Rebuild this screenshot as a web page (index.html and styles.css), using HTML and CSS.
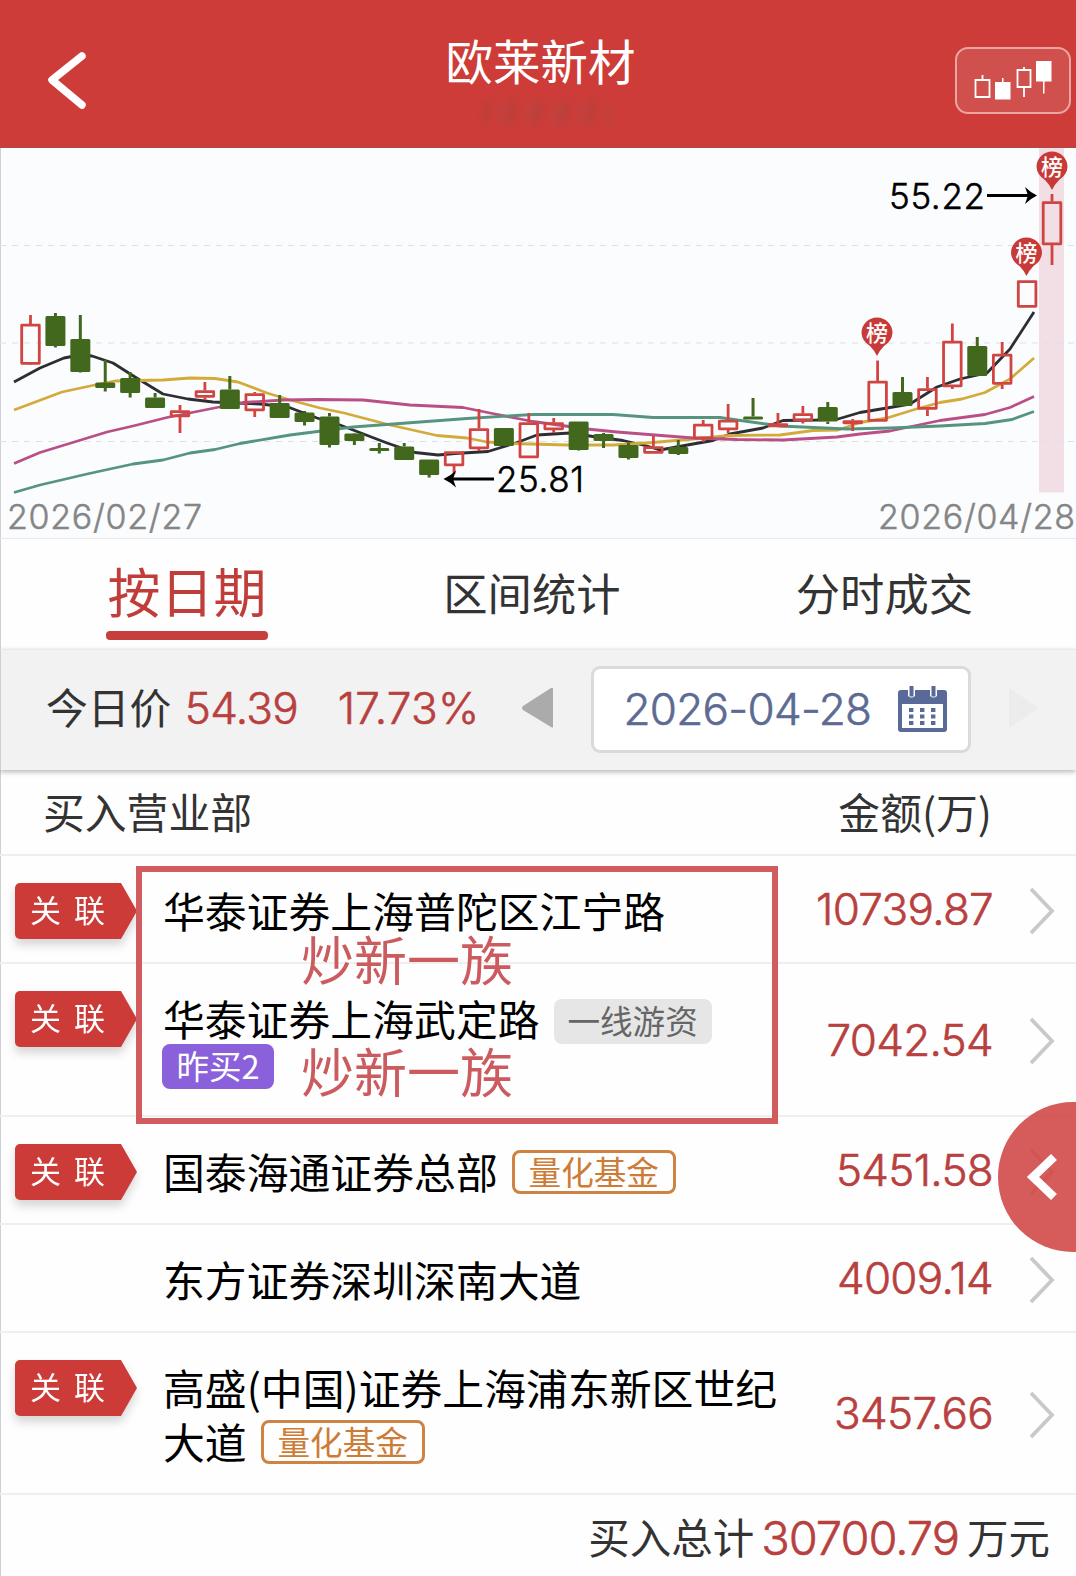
FILE: index.html
```
<!DOCTYPE html>
<html lang="zh-CN">
<head>
    <meta charset="UTF-8">
    <title>欧莱新材</title>
    <link rel="stylesheet" href="styles.css">
    <script type="text/javascript" src="chart.js"></script>
</head>
<body>
    <div id="outer">
        <!--顶部标题栏-->
        <div id="header">
            <svg class="back" width="44" height="64" viewBox="0 0 44 64">
                <path d="M36 7 L6 31 L36 56"/>
            </svg>
            <div class="title">
                <h1>欧莱新材</h1>
                <div class="smudge"></div>
            </div>
            <div class="kBtn">
                <svg width="112" height="63" viewBox="957 49 112 63">
                    <path class="hollow" d="M975.5 80h14v17h-14zM982.5 75v5M1017.5 70h13v17h-13zM1024 67v3M1024 87v10"/>
                    <path class="full" d="M995 82h15.500v17.500h-15.500zM1002 78h1.500v4h-1.500zM1036 61h15.500v20.500h-15.500zM1043 81h1.500v12.500h-1.500z"/>
                </svg>
            </div>
        </div>

        <!--K线图-->
        <div id="chart">
            <svg id="kline" width="1076" height="390" viewBox="0 148 1076 390">
                <rect class="band" x="1039" y="148" width="25" height="344.500"/>
                <path class="grid" d="M0 245.500H1076M0 343H1076M0 441.500H1076"/>
                <g id="lines"></g>
                <g id="candles"></g>
                <g id="marks"></g>
                <path class="arrow" d="M987 195.500H1034"/>
                <path d="M1037 195.500Q1030 192 1025 187L1028 195.500L1025 204Q1030 199 1037 195.500Z"/>
                <path class="arrow" d="M494 479H447"/>
                <path d="M443.500 479Q451 475.500 456 470.500L453 479L456 487.500Q451 482.500 443.500 479Z"/>
                <text class="price" x="889" y="208.500" textLength="96">55.22</text>
                <text class="price" x="496" y="492" textLength="88">25.81</text>
                <text class="day" x="7" y="529" textLength="195">2026/02/27</text>
                <text class="day" x="878" y="529" textLength="197">2026/04/28</text>
            </svg>
        </div>

        <!--选项卡-->
        <ul id="tabs">
            <li class="active">按日期</li>
            <li>区间统计</li>
            <li>分时成交</li>
        </ul>

        <!--日期选择-->
        <div id="dateBar">
            <span class="label">今日价</span>
            <span class="num now">54.39</span>
            <span class="num rate">17.73%</span>
            <svg class="prev" width="32" height="42" viewBox="0 0 32 42"><path d="M31 2V40Q31 41 29 40L1 23Q-1 21 1 19L29 1Q31 0 31 2Z"/></svg>
            <div class="picker">
                <span class="num">2026-04-28</span>
                <svg width="49" height="46" viewBox="0 0 49 46">
                    <path class="cal" d="M3 4H10V10Q13.500 13 17 10V4H32V10Q35.500 13 39 10V4H46Q49 4 49 7V43Q49 46 46 46H3Q0 46 0 43V7Q0 4 3 4ZM4 18V42H45V18Z"/>
                    <path class="pin" d="M13.500 0V10.500M35.500 0V10.500"/>
                    <path class="dots" d="M11 24H38M11 30.500H38M11 37H38"/>
                </svg>
            </div>
            <svg class="next" width="32" height="42" viewBox="0 0 32 42"><path d="M1 1L31 21L1 41Z"/></svg>
        </div>

        <!--表头-->
        <div id="listHead">
            <span>买入营业部</span>
            <span>金额(万)</span>
        </div>

        <!--营业部列表-->
        <ul id="list">
            <li>
                <div class="rel"><span>关 联</span></div>
                <div class="name">华泰证券上海普陀区江宁路</div>
                <div class="num money">10739.87</div>
                <svg class="more" width="26" height="48" viewBox="0 0 26 48"><path d="M2 2L23 24L2 46"/></svg>
            </li>
            <li class="two">
                <div class="rel"><span>关 联</span></div>
                <div class="name">华泰证券上海武定路<span class="tag gray">一线游资</span>
                    <div class="tagLine"><span class="tag purple">昨买2</span></div>
                </div>
                <div class="num money">7042.54</div>
                <svg class="more" width="26" height="48" viewBox="0 0 26 48"><path d="M2 2L23 24L2 46"/></svg>
            </li>
            <li>
                <div class="rel"><span>关 联</span></div>
                <div class="name">国泰海通证券总部<span class="tag orange">量化基金</span></div>
                <div class="num money">5451.58</div>
                <svg class="more" width="26" height="48" viewBox="0 0 26 48"><path d="M2 2L23 24L2 46"/></svg>
            </li>
            <li>
                <div class="rel none"></div>
                <div class="name">东方证券深圳深南大道</div>
                <div class="num money">4009.14</div>
                <svg class="more" width="26" height="48" viewBox="0 0 26 48"><path d="M2 2L23 24L2 46"/></svg>
            </li>
            <li class="long">
                <div class="rel"><span>关 联</span></div>
                <div class="name">高盛(中国)证券上海浦东新区世纪大道<span class="tag orange">量化基金</span></div>
                <div class="num money">3457.66</div>
                <svg class="more" width="26" height="48" viewBox="0 0 26 48"><path d="M2 2L23 24L2 46"/></svg>
            </li>
        </ul>

        <!--合计-->
        <div id="total">
            <span>买入总计</span>
            <span class="num sum">30700.79</span>
            <span>万元</span>
        </div>

        <!--标注框，盖在前两行上-->
        <div id="note">
            <p class="first">炒新一族</p>
            <p class="second">炒新一族</p>
        </div>

        <!--右侧悬浮按钮-->
        <div id="float">
            <svg width="32" height="48" viewBox="0 0 32 48"><path d="M29 4L8 24L29 44"/></svg>
        </div>
    </div>
</body>
</html>
```
FILE: chart.js
```
window.onload = function () {
    //每根K线: [颜色, 最高, 实体上沿, 实体下沿, 最低]，单位为像素
    var data = [
        ["r", 315, 324, 364.5, 364], ["g", 313, 316, 346, 347.5], ["g", 315, 339, 372, 372.5],
        ["g", 360, 382.5, 388, 391.5], ["g", 372, 378, 393, 397.5], ["g", 393, 397.5, 408, 408],
        ["r", 405, 410.5, 417, 433], ["r", 382, 390.5, 397.5, 400], ["g", 376, 389.5, 409, 409],
        ["r", 392, 393.5, 411, 417], ["g", 395, 403, 418, 418], ["g", 411, 412.5, 422, 425.5],
        ["g", 413, 416.5, 445, 447.5], ["g", 433, 433.5, 441, 445], ["g", 443, 448, 451, 453.5],
        ["g", 443, 446.5, 460, 460], ["g", 459.5, 459.5, 475, 477.5], ["r", 451.5, 451.5, 466, 474],
        ["r", 409, 428.5, 449, 451], ["g", 428, 428, 446, 446], ["r", 413, 422.5, 458, 458],
        ["r", 418, 422.5, 430, 433], ["g", 421.5, 421.5, 450, 450.5], ["g", 433, 434, 441, 448],
        ["g", 443, 445, 458, 459.5], ["r", 436, 446.5, 453.5, 453.5], ["g", 440, 447, 454, 455],
        ["r", 420, 424, 439, 442], ["r", 404, 420, 430, 433], ["g", 398, 416.5, 419.5, 419.5],
        ["r", 413, 423.5, 427, 427], ["r", 406, 413.5, 421, 423.5], ["g", 402, 407, 421.5, 424],
        ["r", 419, 420.5, 424, 431], ["r", 360.5, 381, 421.5, 421.5], ["g", 377, 392, 406, 406],
        ["r", 377, 388.5, 409.5, 416], ["r", 323.5, 341, 387, 389], ["g", 337, 346, 376, 376],
        ["r", 342, 354, 384.5, 389], ["r", 280.5, 280.5, 307.5, 307.5], ["r", 194, 201.5, 245, 265]
    ];
    //均线
    var ma = {
        ma5: "14,382 40,368 64,358 80,355 92,356 113,363 135,377 163,394 188,399 213,402 260,404 288,407 317,418 340,425 387,443 415,452.5 438,455 455,453.5 488,451.5 517,442.5 537,435 570,433 593,436.5 623,440.5 647,446 660,450 693,444 713,440.5 730,434 763,428 783,420.5 817,420 838,419 860,412.5 887,408 910,404 937,387 960,379 987,373 1010,349 1034,312",
        ma10: "14,410 62,392 90,386 115,381 163,380 190,378 215,378.5 238,382 267,393 290,400 320,408 344,413 390,425 437,435.5 467,438 487,442 513,443.5 567,445 613,445 653,442.5 693,439 730,435.5 780,435 813,430.5 838,430 860,422.5 887,418 913,410 940,402.5 962,399 985,392.5 1010,379 1034,358",
        ma20: "14,463.5 40,452.5 107,432 133,426 167,417.5 217,407.5 243,402.5 283,400 317,399.5 363,400 410,405 463,407.5 490,413 533,421.5 587,429 617,432 693,438 737,439.5 783,440 837,437 860,434 890,431 940,420.5 985,414.5 1010,407.5 1034,396.5",
        ma30: "14,492.5 40,485 87,474 133,464 163,460 190,453 215,449.5 240,443.5 290,435 353,427 467,418.5 533,414.5 613,414.5 653,417.5 720,417.5 737,420 780,426 847,429 890,428 940,426 985,423.5 1012,419.5 1034,411.5"
    };
    //上榜标记的圆心坐标
    var marks = [[877, 333], [1026.5, 253], [1052, 167]];

    var html = "";
    //画均线
    for(var key in ma){
        html += '<polyline class="' + key + '" points="' + ma[key] + '"/>';
    }
    document.getElementById("lines").innerHTML = html;

    //画K线
    html = "";
    for(var i=0; i<data.length; i++){
        var d = data[i];
        var x = 30.5 + 24.915*i;
        html += '<g class="' + d[0] + '"><path d="M' + x + ' ' + d[1] + 'V' + d[2] + 'M' + x + ' ' + d[3] + 'V' + d[4] + '"/>';
        if(d[0] == "g"){
            html += '<rect x="' + (x-10) + '" y="' + d[2] + '" width="20" height="' + (d[3]-d[2]) + '" rx="1.5"/>';
        }else{
            //空心的实体，描边往里收
            html += '<rect x="' + (x-8.8) + '" y="' + (d[2]+1.2) + '" width="17.6" height="' + Math.max(d[3]-d[2]-2.4, 1) + '"/>';
        }
        html += '</g>';
    }
    document.getElementById("candles").innerHTML = html;

    //画上榜标记
    html = "";
    for(var j=0; j<marks.length; j++){
        html += '<g transform="translate(' + marks[j][0] + ',' + marks[j][1] + ')">'
            + '<path d="M-15.500 0A15.500 15.500 0 1 1 15.500 0Q15 8 7 13Q3 17 0 23Q-3 17 -7 13Q-15 8 -15.500 0Z"/>'
            + '<text x="0" y="8">榜</text></g>';
    }
    document.getElementById("marks").innerHTML = html;
};
```
FILE: styles.css
```
*{
    margin: 0;
    padding: 0;
    box-sizing: border-box;
}

body{
    background-color: #fefefe;
    font-family: "Noto Sans CJK SC", sans-serif;
    color: #333;
}

ul{
    list-style: none;
}

svg{
    display: block;
    flex: none;
}

#outer{
    width: 1076px;
    height: 1576px;
    /*开启相对定位*/
    position: relative;
    overflow: hidden;
    box-shadow: inset 1px 0 0 #d0d0d2;
}

/*数字统一的字体*/
.num{
    font-family: Inter, "Noto Sans CJK SC", sans-serif;
    font-weight: 300;
    font-size: 44px;
    line-height: 54px;
    letter-spacing: -0.7px;
    color: #b8403e;
    -webkit-text-stroke: 0.6px;
    white-space: nowrap;
}

/*顶部标题栏*/
#header{
    height: 148px;
    padding: 0 5px 0 46px;
    background-color: #cd3c38;
    border-bottom: 1px solid #a84b48;
    display: flex;
    justify-content: space-between;
}

.back{
    margin-top: 49px;
}

.back path{
    fill: none;
    stroke: #fff;
    stroke-width: 7.5;
    stroke-linecap: round;
    stroke-linejoin: round;
}

.title{
    margin-left: 36px;
    padding-top: 25px;
}

.title h1{
    font-size: 47.5px;
    line-height: 70px;
    font-weight: normal;
    color: #fff;
}

/*标题下面的模糊痕迹*/
.smudge{
    width: 130px;
    height: 24px;
    margin: 6px 0 0 37px;
    background: repeating-linear-gradient(100deg, #a5443f 0 7px, #cd3c38 10px 15px, #b54a46 20px 26px);
    opacity: 0.4;
    filter: blur(3px);
}

.kBtn{
    width: 116px;
    height: 67px;
    margin-top: 47px;
    border: 2px solid #eda5a2;
    border-radius: 13px;
    background-color: #d0504e;
}

.hollow{
    fill: none;
    stroke: #fff;
    stroke-width: 1.8;
}

.full{
    fill: #fff;
}

/*K线图*/
#chart{
    height: 391px;
    background-color: #fbfcfe;
    border-bottom: 1px solid #e8e9ec;
}

#kline{
    box-shadow: inset 1px 0 0 #d0d0d2;
}

.band{
    fill: #f1dfe5;
}

.grid{
    stroke: #dfe0e6;
    stroke-width: 1.2;
    stroke-dasharray: 6 6;
}

#lines polyline{
    fill: none;
    stroke-width: 2.8;
    stroke-linejoin: round;
}

#lines .ma5{
    stroke: #2c2e33;
}

#lines .ma10{
    stroke: #d3ab3a;
}

#lines .ma20{
    stroke: #b94f86;
}

#lines .ma30{
    stroke: #569480;
}

#candles .r{
    fill: none;
    stroke: #d04542;
    stroke-width: 2.8;
    stroke-linejoin: round;
}

#candles .g{
    fill: #41681d;
}

#candles .g path{
    stroke: #41681d;
    stroke-width: 3;
}

#marks path{
    fill: #c83a38;
}

#marks text{
    font-size: 22px;
    font-weight: 500;
    text-anchor: middle;
    fill: #fff;
}

.arrow{
    fill: none;
    stroke: #000;
    stroke-width: 3;
}

.price{
    font-family: Inter, sans-serif;
    font-weight: 300;
    font-size: 35px;
    fill: #000;
    stroke: #000;
    stroke-width: 0.5;
}

.day{
    font-family: Inter, sans-serif;
    font-weight: 300;
    font-size: 34px;
    fill: #858585;
    stroke: #858585;
    stroke-width: 0.5;
}

/*选项卡*/
#tabs{
    height: 110px;
    padding: 0 103px 0 106px;
    display: flex;
    justify-content: space-between;
}

#tabs li{
    font-size: 44.3px;
    line-height: 106px;
}

#tabs .active{
    width: 162px;
    font-size: 53px;
    line-height: 103px;
    text-align: center;
    color: #c03d3a;
}

/*选中的下划线*/
#tabs .active::after{
    content: "";
    display: block;
    height: 9px;
    margin-top: -11px;
    border-radius: 4px;
    background-color: #c63f3d;
}

/*日期选择*/
#dateBar{
    height: 121px;
    padding: 0 36px 4px 46px;
    background-color: #f2f2f2;
    border-top: 1px solid #e9e9e9;
    box-shadow: inset 1px 0 0 #d0d0d2, 0 2px 5px rgba(0,0,0,0.28);
    display: flex;
    align-items: center;
    /*阴影要盖住下面的表头*/
    position: relative;
}

.label{
    width: 139px;
    font-size: 41.8px;
    line-height: 60px;
    margin-top: -4px;
}

.now{
    width: 153px;
}

.rate{
    width: 185px;
    letter-spacing: 0.3px;
}

.prev path{
    fill: #ababab;
}

.next path{
    fill: #ececec;
}

.picker{
    width: 380px;
    height: 87px;
    margin: 2px 37px 0 37px;
    padding: 0 21px 0 29px;
    border: 3px solid #dadada;
    border-radius: 9px;
    background-color: #fff;
    display: flex;
    align-items: center;
    justify-content: space-between;
}

.picker .num{
    color: #5c6b93;
}

.cal{
    fill: #596a99;
    fill-rule: evenodd;
}

.pin{
    stroke: #596a99;
    stroke-width: 4;
}

.dots{
    stroke: #596a99;
    stroke-width: 4;
    stroke-dasharray: 4.4 6.6;
}

/*表头*/
#listHead{
    height: 86px;
    padding: 11px 84px 0 43px;
    border-bottom: 2px solid #eeeeee;
    display: flex;
    justify-content: space-between;
    font-size: 41.8px;
    line-height: 60px;
}

/*营业部列表*/
#list li{
    height: 108px;
    padding-left: 15px;
    border-bottom: 2px solid #efefef;
    display: flex;
}

#list .two{
    height: 153px;
}

#list .long{
    height: 162px;
}

.rel{
    width: 122px;
    height: 56px;
    margin: 27px 26px 0 0;
    flex: none;
    filter: drop-shadow(0 6px 5px rgba(0,0,0,0.16));
}

.rel span{
    display: block;
    height: 56px;
    padding-left: 15px;
    border-radius: 5px;
    background-color: #cc3b37;
    clip-path: polygon(0 0, 106px 0, 122px 50%, 106px 100%, 0 100%);
    font-size: 31px;
    line-height: 52px;
    word-spacing: 6px;
    color: #fff;
}

.name{
    width: 625px;
    padding-top: 27px;
    font-size: 41.85px;
    line-height: 54px;
    color: #000;
}

.money{
    width: 205px;
    align-self: center;
    text-align: right;
}

.more{
    margin: 3px 0 0 36px;
    align-self: center;
}

.more path{
    fill: none;
    stroke: #c9c9c9;
    stroke-width: 3.8;
}

/*标签*/
.tag{
    display: inline-block;
    height: 45px;
    margin-left: 14px;
    border-radius: 8px;
    font-size: 32.6px;
    line-height: 41px;
    text-align: center;
    vertical-align: 2px;
}

.gray{
    width: 158px;
    background-color: #e6e6e6;
    color: #666;
}

.purple{
    width: 112px;
    margin-left: -1px;
    background-color: #8a60db;
    color: #fff;
}

.orange{
    width: 164px;
    height: 44px;
    border: 3px solid #cf8343;
    line-height: 36px;
    color: #cc7c36;
    vertical-align: 4px;
}

.tagLine{
    margin-top: -9px;
}

/*合计*/
#total{
    height: 82px;
    padding: 11px 26px 0 0;
    display: flex;
    justify-content: flex-end;
    font-size: 41.5px;
    line-height: 60px;
}

.sum{
    margin: 1px 8px 0 7px;
    font-size: 47px;
    line-height: 62px;
    letter-spacing: -1px;
}

/*标注框*/
#note{
    width: 642px;
    height: 258px;
    border: 6px solid #d15b5d;
    position: absolute;
    left: 136px;
    top: 866px;
}

#note p{
    font-size: 53px;
    line-height: 60px;
    color: #cb5b5f;
    position: absolute;
    left: 159px;
}

#note .first{
    top: 56px;
}

#note .second{
    top: 168px;
}

/*右侧悬浮按钮*/
#float{
    width: 150px;
    height: 150px;
    padding: 51px 0 0 27px;
    border-radius: 50%;
    background-color: rgba(207,70,68,0.88);
    position: absolute;
    left: 998px;
    top: 1102px;
}

#float path{
    fill: none;
    stroke: #fff;
    stroke-width: 8.5;
}
```
